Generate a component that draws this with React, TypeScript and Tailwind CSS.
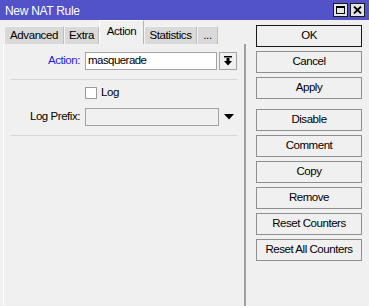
import React from 'react';

const font = { fontFamily: '"Liberation Sans", Arial, sans-serif' };

const tabs = [
  { label: 'Advanced', w: 'w-[60px]' },
  { label: 'Extra', w: 'w-[35px]' },
  { label: 'Action', w: 'w-[45px]', active: true },
  { label: 'Statistics', w: 'w-[53px]' },
  { label: '...', w: 'w-[21px]' },
];

const Btn: React.FC<{ label: string; primary?: boolean; className?: string }> = ({ label, primary, className }) => (
  <button
    className={
      'w-[106px] h-[22px] flex items-center justify-center bg-[#f0f0f0] text-[11.5px] tracking-[-0.45px] text-black ' +
      (primary ? 'border border-[#1a1a1a] ' : 'border border-[#8f8f8f] ') +
      (className ?? '')
    }
  >
    {label}
  </button>
);

const App: React.FC = () => {
  return (
    <div className="w-[369px] h-[306px] bg-[#f0f0f0] flex flex-col overflow-hidden select-none" style={font}>
      {/* title bar */}
      <div className="h-[20px] bg-[#5252c9] flex items-center justify-between pl-[5px] pr-[4px]">
        <span className="text-white text-[12px] tracking-[-0.3px] leading-none pt-[1px]">New NAT Rule</span>
        <div className="flex gap-[2px]">
          <div className="w-[15px] h-[14px] bg-[#e4e4e4] border border-[#1a1a1a] flex items-center justify-center">
            <div className="w-[9px] h-[8px] border border-black border-t-2" />
          </div>
          <div className="w-[15px] h-[14px] bg-[#e4e4e4] border border-[#1a1a1a] flex items-center justify-center">
            <svg width="9" height="8" viewBox="0 0 9 8">
              <path d="M1 0.5 L8 7.5 M8 0.5 L1 7.5" stroke="black" strokeWidth="1.8" />
            </svg>
          </div>
        </div>
      </div>

      <div className="flex flex-1 min-h-0">
        {/* left: tabs + panel */}
        <div className="w-[246px] flex flex-col">
          <div className="h-[24px] flex items-end pl-[4px] text-[11.5px] tracking-[-0.4px]">
            {tabs.map((t) =>
              t.active ? (
                <div
                  key={t.label}
                  className={`${t.w} h-[24px] bg-[#f0f0f0] border-l border-t border-white border-r border-r-[#b4b4b4] flex items-center justify-center text-black pb-[2px]`}
                >
                  {t.label}
                </div>
              ) : (
                <div
                  key={t.label}
                  className={`${t.w} h-[18px] bg-[#d9d9d9] border-l border-t border-[#f4f4f4] border-r border-r-[#bdbdbd] flex items-center justify-center text-black`}
                >
                  {t.label}
                </div>
              )
            )}
          </div>

          <div className="ml-[3px] flex-1 border-l border-white border-r-2 border-r-[#a0a0a0] flex flex-col pt-[8px] text-[11.5px] tracking-[-0.45px]">
            <div className="flex items-center h-[18px]">
              <span className="w-[76px] text-right text-[#1d1de6]">Action:</span>
              <div className="ml-[5px] w-[132px] h-[18px] bg-white border border-[#a3a3a3] flex items-center pl-[2px] text-black tracking-[-0.55px]">
                masquerade
              </div>
              <div className="ml-[2px] w-[18px] h-[18px] border border-[#a3a3a3] bg-[#f0f0f0] flex items-center justify-center">
                <svg width="8" height="10" viewBox="0 0 8 10">
                  <rect x="0" y="0" width="8" height="1.5" fill="black" />
                  <rect x="2.5" y="2" width="3" height="3" fill="black" />
                  <path d="M0 5 L8 5 L4 9.5 Z" fill="black" />
                </svg>
              </div>
            </div>

            <div className="mt-[9px] ml-[7px] w-[226px] h-px bg-[#d6d6d6]" />

            <div className="mt-[7px] flex items-center h-[12px] ml-[81px]">
              <div className="w-[12px] h-[12px] bg-white border border-[#9a9a9a]" />
              <span className="ml-[4px] text-black">Log</span>
            </div>

            <div className="mt-[9px] flex items-center h-[18px]">
              <span className="w-[76px] text-right text-black">Log Prefix:</span>
              <div className="ml-[5px] w-[134px] h-[18px] bg-[#f0f0f0] border border-[#a3a3a3]" />
              <svg className="ml-[5px]" width="10" height="6" viewBox="0 0 10 6">
                <path d="M0 0 L10 0 L5 5.5 Z" fill="black" />
              </svg>
            </div>

            <div className="mt-[9px] ml-[7px] w-[226px] h-px bg-[#d6d6d6]" />
          </div>
        </div>

        {/* right: buttons */}
        <div className="flex-1 flex flex-col pl-[10px] pt-[5px] gap-[4px]">
          <Btn label="OK" primary />
          <Btn label="Cancel" />
          <Btn label="Apply" />
          <Btn label="Disable" className="mt-[6px]" />
          <Btn label="Comment" />
          <Btn label="Copy" />
          <Btn label="Remove" />
          <Btn label="Reset Counters" />
          <Btn label="Reset All Counters" />
        </div>
      </div>
    </div>
  );
};

export default App;
